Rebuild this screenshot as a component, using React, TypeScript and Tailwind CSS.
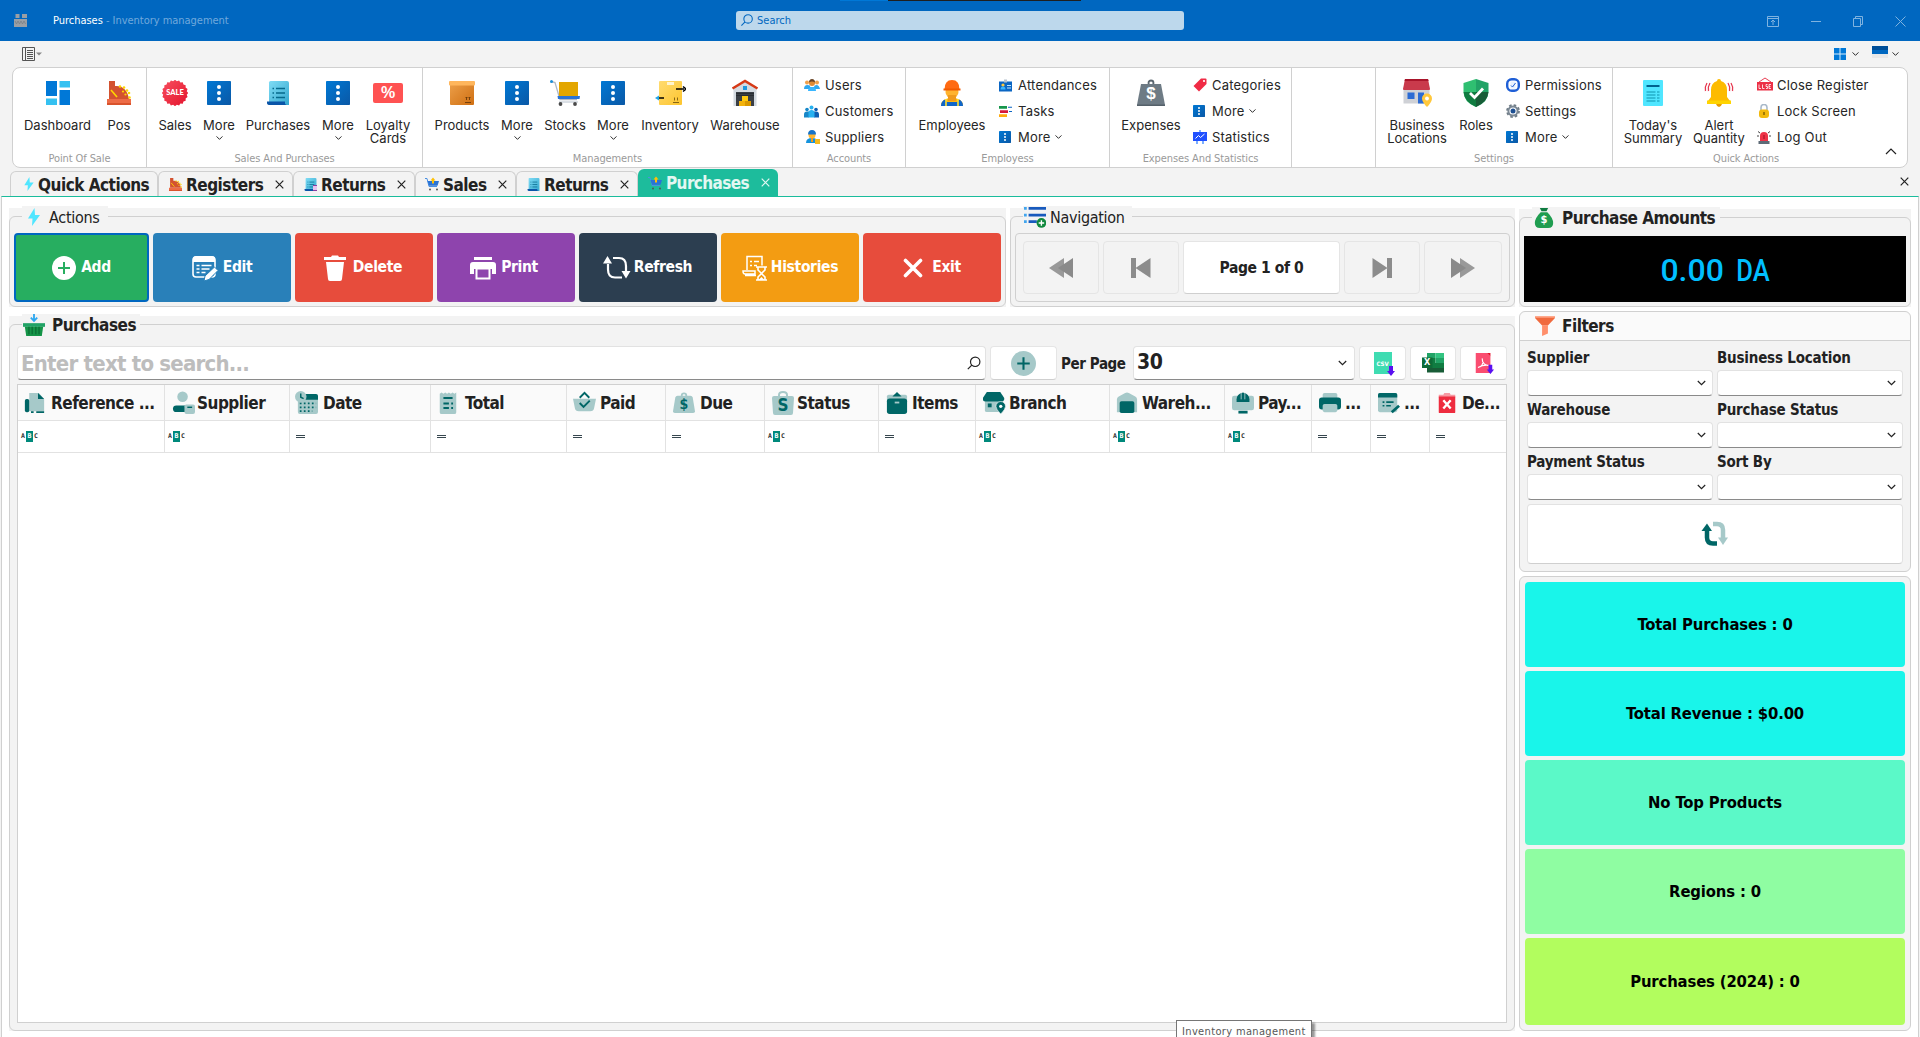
import React from "react";

type P = { className?: string };
const T = "#006666";
const L = "#a6c9c9";

function Svg({ s = 24, vb = "0 0 24 24", children, className = "" }: { s?: number; vb?: string; children: React.ReactNode; className?: string }) {
  return (
    <svg width={s} height={s} viewBox={vb} fill="none" className={`shrink-0 ${className}`}>
      {children}
    </svg>
  );
}

const Chevron = ({ className = "" }: P) => (
  <svg width="9" height="6" viewBox="0 0 9 6" fill="none" className={`shrink-0 ${className}`}>
    <path d="M.8 1l3.7 3.7L8.2 1" stroke="#222" strokeWidth="1.2" />
  </svg>
);
const Cross = ({ className = "text-[#222]" }: P) => (
  <svg width="9" height="9" viewBox="0 0 9 9" fill="none" className={`shrink-0 ${className}`}>
    <path d="M.7.7l7.6 7.6M8.3.7L.7 8.3" stroke="currentColor" strokeWidth="1.2" />
  </svg>
);
const Magnifier = ({ className = "" }: P) => (
  <svg width="14" height="14" viewBox="0 0 14 14" fill="none" className={`shrink-0 ${className}`}>
    <circle cx="8.2" cy="5.8" r="4.7" stroke="currentColor" strokeWidth="1.2" />
    <path d="M4.8 9.2L.8 13.2" stroke="currentColor" strokeWidth="1.2" />
  </svg>
);

/* Ribbon icons */
const Dashboard = () => (
  <Svg>
    <path d="M0 0h11v15H0z" fill="#0078d7" /><path d="M0 17.5h11V24H0z" fill="#35c1f1" />
    <path d="M13.5 0H24v6.500H13.500z" fill="#35c1f1" /><path d="M13.500 9H24v15H13.500z" fill="#0078d7" />
  </Svg>
);
const Register = ({ s = 24 }: { s?: number }) => (
  <Svg s={s}>
    <path d="M2 0h6v5c8-1 13 5 14 13H2z" fill="#d35230" />
    <path d="M0 18h24v6H0z" fill="#ed6c47" /><path d="M0 22h24v2H0z" fill="#d9532c" />
    <path d="M4 9l6 7" stroke="#ffd600" strokeWidth="1.6" />
    <g fill="#ffd600"><circle cx="13" cy="5.500" r="1.300" /><circle cx="17" cy="6.500" r="1.300" /><circle cx="20" cy="9.500" r="1.300" /><circle cx="22" cy="12" r="1.300" /><circle cx="16" cy="10.500" r="1.100" /><circle cx="18.500" cy="13.500" r="1.100" /><circle cx="22.500" cy="16.500" r="1.300" /></g>
  </Svg>
);
const Sale = () => {
  const pts = Array.from({ length: 40 }, (_, i) => {
    const r = i % 2 ? 11.900 : 13.200;
    const a = (i * Math.PI) / 20;
    return `${13 + r * Math.cos(a)},${13 + r * Math.sin(a)}`;
  }).join(" ");
  return (
    <div className="relative size-[26px]">
      <Svg s={26} vb="0 0 26 26">
        <defs><linearGradient id="sale" x1="0" y1="0" x2="1" y2="1"><stop stopColor="#f8505f" /><stop offset="1" stopColor="#e3122c" /></linearGradient></defs>
        <polygon points={pts} fill="url(#sale)" />
      </Svg>
      <span className="absolute inset-0 flex items-center justify-center font-[Lato] text-[7.5px] font-black text-white">SALE</span>
    </div>
  );
};
const More = ({ s = 24 }: { s?: number }) => (
  <Svg s={s}>
    <defs><linearGradient id="more" x1="0" y1="0" x2="1" y2="1"><stop stopColor="#0078d4" /><stop offset="1" stopColor="#0a58a6" /></linearGradient></defs>
    <rect width="24" height="24" rx=".8" fill="url(#more)" />
    <g fill="#fff"><circle cx="12" cy="6" r="2" /><circle cx="12" cy="12" r="2" /><circle cx="12" cy="18" r="2" /></g>
  </Svg>
);
const Scroll = ({ s = 24 }: { s?: number }) => (
  <Svg s={s}>
    <defs><linearGradient id="scroll" x1="0" y1="0" x2="1" y2="1"><stop stopColor="#7fdcf5" /><stop offset="1" stopColor="#34a8cf" /></linearGradient></defs>
    <path d="M3 1.500Q3 0 4.500 0H21q2 0 2 2v22H3z" fill="url(#scroll)" />
    <path d="M1 20.500h18V22q0 2 3 2H4q-3 0-3-2z" fill="#0a55a8" />
    <path d="M6.500 7.500h1.500M10 7.500h9M6.500 12h1.500M10 12h9M6.500 16.500h1.500M10 16.500h9" stroke="#066a8c" strokeWidth="1.400" />
  </Svg>
);
const Percent = () => (
  <div className="flex h-5 w-[30px] items-center justify-center rounded-[2px] bg-[#ff5252] font-['Liberation_Sans'] text-base font-bold text-white">%</div>
);
const Box = () => (
  <Svg s={26} vb="0 0 26 26">
    <defs><linearGradient id="box" x1="0" y1="0" x2="1" y2="1"><stop stopColor="#eda04a" /><stop offset="1" stopColor="#cf6f12" /></linearGradient></defs>
    <rect x="1" y="2" width="24" height="23" rx="1" fill="url(#box)" /><rect x="0" y="1" width="26" height="4.500" rx="1" fill="#ffb65c" />
    <path d="M16 22.500h6M17.500 20v-3m-1 1l1-1 1 1M20.500 20v-3m-1 1l1-1 1 1" stroke="#6b3a0a" strokeWidth=".9" />
  </Svg>
);
const Trolley = () => (
  <Svg s={30} vb="0 0 30 26">
    <path d="M1 1.500l4 1 5 17 17 0" stroke="#b0b8c4" strokeWidth="1.300" /><circle cx="1.500" cy="1.500" r="1.500" fill="#1b8fd8" />
    <path d="M9 2h19v14H9z" fill="#e3a600" /><path d="M7.500 16H30l-.5 3H8z" fill="#2a74d6" />
    <path d="M9 22h19" stroke="#cfd6de" strokeWidth="1.500" /><circle cx="10.500" cy="24" r="1.900" fill="#4a4a4a" /><circle cx="25" cy="24" r="1.900" fill="#4a4a4a" />
  </Svg>
);
const InventoryBox = () => (
  <Svg s={32} vb="0 0 32 26">
    <defs><linearGradient id="inv" x1="0" y1="0" x2="1" y2="1"><stop stopColor="#ffdb70" /><stop offset="1" stopColor="#fdc52e" /></linearGradient></defs>
    <rect x="5" y="1" width="23" height="24" rx="1" fill="url(#inv)" /><path d="M13 2h7v3h-7z" fill="#fff4cf" />
    <path d="M19 22.500h6M20.500 20.500v-3M23.500 20.500v-3" stroke="#7a5a10" strokeWidth=".9" />
    <path d="M22 9h8M29 6.500L32 9l-3 2.500" stroke="#000" strokeWidth="1.500" /><path d="M10 18H3" stroke="#000" strokeWidth="1.500" /><path d="M5 15.500L1 18l4 2.500" fill="#22a5e8" />
  </Svg>
);
const Garage = () => (
  <Svg s={28} vb="0 0 28 28">
    <path d="M2.500 10L14 3l11.500 7v17h-23z" fill="#d4dae0" /><path d="M1.500 9.500L14 2l12.500 7.500" stroke="#d63a17" strokeWidth="2.600" />
    <rect x="12" y="7" width="4" height="4" fill="#1d98e0" /><path d="M5 13h18v14H5z" fill="#3a3f45" /><path d="M5 14.500h18M5 16.500h18" stroke="#23272b" strokeWidth=".7" />
    <path d="M11 17h6v5h-6z" fill="#ffc90e" /><path d="M8 22h12v5H8z" fill="#d99800" /><path d="M8 22h6v5H8z" fill="#f2b20c" />
  </Svg>
);
const Worker = () => (
  <Svg s={28} vb="0 0 28 28">
    <path d="M3 27q0-8 11-8t11 8z" fill="#ffb70f" /><circle cx="14" cy="13" r="6.500" fill="#ffb32e" /><path d="M10 16h8v6h-8z" fill="#f09a1c" />
    <path d="M6.500 10.500Q6.500 1 14 1t7.500 9.500z" fill="#ff6a13" /><path d="M5.500 9.500h17v2h-17z" fill="#f25a00" />
    <path d="M3 27q0-5 4-6.500l2 2.500h10l2-2.500q4 1.500 4 6.500z" fill="#0f66c9" /><path d="M8 20v7M20 20v7" stroke="#ffe032" strokeWidth="1.600" />
  </Svg>
);
const Weight = () => (
  <div className="relative size-7">
    <Svg s={28} vb="0 0 28 28"><circle cx="14" cy="4" r="2.500" stroke="#5b6770" strokeWidth="1.800" /><path d="M4 5h20l4 21q0 1-1 1H1q-1 0-1-1z" fill="#6e7b85" /><path d="M0 25.500h28V27H0z" fill="#55616a" /></Svg>
    <span className="absolute inset-x-0 top-[5px] text-center font-['Liberation_Sans'] text-[17px] leading-5 font-bold text-white">$</span>
  </div>
);
const Store = () => (
  <Svg s={30} vb="0 0 30 28">
    <path d="M1.500 9h26v15.500h-26z" fill="#cfd1d6" /><path d="M3 0h23l2 10q0 1-1 1H2q-1 0-1-1z" fill="#c93a4c" /><path d="M3 0h23l.6 2H2.500z" fill="#a8142a" />
    <path d="M5.500 13.500h7V20h-7z" fill="#2b6bd4" /><path d="M16 13.500h6v11h-6z" fill="#2b6bd4" />
    <path d="M25 28q-5-5-5-8.500a5 5 0 0110 0q0 3.500-5 8.500z" fill="#ffc83d" /><circle cx="25" cy="19.500" r="1.900" fill="#fff" />
  </Svg>
);
const Shield = () => (
  <Svg s={28} vb="0 0 28 28">
    <path d="M14 0L1.500 4v8.500Q1.500 23 14 28z" fill="#2fbf71" /><path d="M14 0l12.500 4v8.500Q26.500 23 14 28z" fill="#21a366" />
    <path d="M1.500 13h12.500v15Q2.500 23 1.500 13z" fill="#107c41" /><path d="M26.500 13H14v15q11.500-5 12.500-15z" fill="#185c37" />
    <path d="M8 14l4.500 4.500L21 9.500" stroke="#fff" strokeWidth="2.800" />
  </Svg>
);
const Summary = () => (
  <Svg s={26} vb="0 0 26 26">
    <rect x="3" y="0" width="20" height="26" rx="1" fill="#50e6ff" /><path d="M6.500 6h13" stroke="#00638f" strokeWidth="2.200" />
    <path d="M6.500 12h9M17 12h2.500M6.500 15h9M17 15h2.500M6.500 18h9M17 18h2.500M6.500 21h9M17 21h2.500" stroke="#0f93b0" strokeWidth="1.200" />
  </Svg>
);
const Bell = () => (
  <Svg s={32} vb="0 0 32 28">
    <path d="M16 0a2 2 0 012 2q6 2 6 9v7l3 4H5l3-4v-7q0-7 6-9a2 2 0 012-2z" fill="#fdbb00" /><path d="M4 21.500h24V25H4z" fill="#ffd400" /><path d="M13 25h6q-1 3-3 3t-3-3z" fill="#e89b00" />
    <path d="M4 4Q1.500 8 2.500 12M7 4Q4.500 8 5.500 12M28 4q2.500 4 1.500 8M25 4q2.500 4 1.500 8" stroke="#e63950" strokeWidth="1.300" />
  </Svg>
);

/* Small ribbon icons */
const Users = () => (
  <Svg s={16} vb="0 0 16 12"><path d="M0 10q0-4 3.500-4T6 8h4q0-2 2.500-2T16 10z" fill="#2ea8f0" /><path d="M4 12q0-4 4-4t4 4z" fill="#39b6ff" /><circle cx="3" cy="3.500" r="2" fill="#f0a04b" /><circle cx="13" cy="3.500" r="2" fill="#f0a04b" /><circle cx="8" cy="4" r="3" fill="#e08b34" /><path d="M5 3.500Q5 0 8 0t3 3.500Q8 1.500 5 3.500z" fill="#6b4526" /></Svg>
);
const Customers = () => (
  <Svg s={15} vb="0 0 15 12"><path d="M0 12V9q0-3 3-3h2v6z" fill="#1787c8" /><path d="M15 12V9q0-3-3-3h-2v6z" fill="#0d5fb3" /><path d="M4.500 12V7q0-2.500 3-2.500t3 2.500v5z" fill="#27b1f0" /><circle cx="3" cy="4" r="1.800" fill="#1787c8" /><circle cx="12" cy="4" r="1.800" fill="#0d5fb3" /><circle cx="7.500" cy="2" r="2" fill="#27b1f0" /></Svg>
);
const Supplier = () => (
  <Svg s={14} vb="0 0 14 14" className="ml-0.5"><path d="M0 13q0-5 6-5t6 5z" fill="#1593dd" /><circle cx="6" cy="5" r="3.500" fill="#ffb52e" /><path d="M2 4.500Q2 0 6 0t4 4.500z" fill="#1674c9" /><path d="M5 8h2v4H5z" fill="#f09a1c" /><path d="M9 9h5v5H9z" fill="#f4b91c" /></Svg>
);
const IdCard = () => (
  <Svg s={13} vb="0 0 13 12"><path d="M0 2h13v10H0z" fill="#0b66c3" /><path d="M5 0h3v3H5z" fill="#b7c3cf" /><circle cx="4" cy="5.500" r="1.600" fill="#ffc83d" /><path d="M1.500 10q0-3 2.500-3t2.500 3z" fill="#39b6ff" /><path d="M8 6h4M8 8.500h4" stroke="#bfe4ff" strokeWidth="1" /></Svg>
);
const TasksIcon = () => (
  <Svg s={13} vb="0 0 13 12"><path d="M0 .5h8v2.800H0z" fill="#16964b" /><path d="M1 4.700h8v2.800H1z" fill="#d6163a" /><path d="M0 8.800h8v2.800H0z" fill="#ffab0f" /><path d="M9 1.800h4M10 6h3" stroke="#0b66c3" strokeWidth="1.100" /></Svg>
);
const Tag = () => (
  <Svg s={14} vb="0 0 14 14"><path d="M8 .5h4.500q1 0 1 1V6L6 13.500.5 8z" fill="#f02b45" /><circle cx="11" cy="3" r="1.100" fill="#fff" /></Svg>
);
const Stats = () => (
  <Svg s={14} vb="0 0 14 14"><path d="M0 2h14v9H0z" fill="#2050ff" /><path d="M7 0v2M4 11v3M10 11v3" stroke="#2479ff" strokeWidth="1.200" /><path d="M2.500 8.500l3-3 2 2 4-3.500" stroke="#fff" strokeWidth="1" /></Svg>
);
const Permission = () => (
  <Svg s={14} vb="0 0 14 14"><rect x="1.200" y="1.200" width="11.600" height="11.600" rx="4.500" stroke="#1f5fd6" strokeWidth="2.400" /><rect x="4.500" y="3.500" width="5" height="7" fill="#e9f2ff" /><path d="M5 7.500l1.500 1.500L9.500 5" stroke="#1f5fd6" strokeWidth="1" /></Svg>
);
const Gear = () => (
  <Svg s={14} vb="0 0 14 14"><circle cx="7" cy="7" r="5.800" stroke="#6e7b85" strokeWidth="2.200" strokeDasharray="2.500 2.050" /><circle cx="7" cy="7" r="4.600" stroke="#7b8894" strokeWidth="2" /><circle cx="7" cy="7" r="2.500" fill="#1d4f91" /></Svg>
);
const CloseReg = () => (
  <Svg s={16} vb="0 0 16 16"><path d="M2 5l6-4 6 4" stroke="#e5283f" strokeWidth=".9" /><path d="M0 5h16v8.500H0z" fill="#ec2f45" /><path d="M2 7.500v4h2M5.500 7.500v4h2M9 11.500h1.500v-2H9v-2h1.500M14 7.500h-2v4h2M12 9.500h1.500" stroke="#fff" strokeWidth=".8" /></Svg>
);
const Lock = () => (
  <Svg s={14} vb="0 0 14 14"><path d="M4 7V3.500a3 3 0 016 0V7" stroke="#a9b9c9" strokeWidth="1.600" /><rect x="2" y="5.500" width="10" height="8.500" rx="3" fill="#f2b90c" /><path d="M7 8v3" stroke="#6b5000" strokeWidth="1.200" /></Svg>
);
const Siren = () => (
  <Svg s={14} vb="0 0 14 14"><path d="M3 11V6q0-4 4-4t4 4v5z" fill="#ee3247" /><path d="M7 5v4" stroke="#9c1025" strokeWidth="1" /><path d="M1.500 11h11v3h-11z" fill="#5e6b77" /><path d="M0 6h2M12 6h2M1 1.500l2 1.500M13 1.500l-2 1.500" stroke="#444" strokeWidth="1" /></Svg>
);
const CartSm = () => (
  <Svg s={14} vb="0 0 14 13"><path d="M0 1h2l2 8h8" stroke="#4a90e2" strokeWidth="1" /><path d="M2.500 3.500H14l-1.500 4.800H4z" fill="#2a74d6" /><path d="M7 6V3H5.500L8 0l2.500 3H9v3z" fill="#ffc107" /><circle cx="5" cy="12" r="1" fill="#555" /><circle cx="12" cy="12" r="1" fill="#555" /></Svg>
);
const Bolt = ({ h, w }: { h: number; w: number }) => (
  <svg width={w} height={h} viewBox="0 0 12 18" className="shrink-0"><path d="M6.500 0L0 10.500h4.500L4 18l8-11H7z" fill="#50e6ff" /></svg>
);

function Big({ w, icon, a, b, chev }: { w: string; icon: React.ReactNode; a: string; b?: string; chev?: boolean }) {
  return (
    <div className={`flex flex-col items-center pt-[9px] ${w}`}>
      <div className="flex h-8 items-center">{icon}</div>
      <div className="mt-2.5 text-[13px] leading-[13px] whitespace-nowrap">{a}</div>
      {b && <div className="text-[13px] leading-[13px] whitespace-nowrap">{b}</div>}
      {chev && <Chevron className="mt-[3px] scale-[.8]" />}
    </div>
  );
}
function Small({ items, gap }: { items: [React.ReactNode, string, boolean?][]; gap: string }) {
  return (
    <div className="flex flex-col pt-1">
      {items.map(([ic, t, c]) => (
        <div key={t} className="flex h-[26px] items-center">
          <div className={`flex ${gap}`}>{ic}</div>
          <span className="pt-px text-[13px] tracking-[.2px] whitespace-nowrap">{t}</span>
          {c && <Chevron className="ml-[3px] scale-[.8]" />}
        </div>
      ))}
    </div>
  );
}
function Group({ w, pl, name, children }: { w: string; pl: string; name?: string; children?: React.ReactNode }) {
  return (
    <div className={`flex flex-col border-r border-[#d0d0d0] last:border-r-0 ${w}`}>
      <div className={`flex h-[83px] ${pl}`}>{children}</div>
      <div className="text-center font-['DejaVu_Sans_Condensed'] text-[11px] leading-4 tracking-[-.1px] text-[#9a9a9a]">{name}</div>
    </div>
  );
}

function Ribbon() {
  return (
    <div className="mx-3 flex h-[101px] shrink-0 overflow-hidden rounded-lg border border-[#d0d0d0] bg-white font-[Inter] text-[#262626]">
      <Group w="w-[134px]" pl="pl-2.5" name="Point Of Sale">
        <Big w="w-[69px]" icon={<Dashboard />} a="Dashboard" />
        <Big w="w-[54px]" icon={<Register />} a="Pos" />
      </Group>
      <Group w="w-[276px]" pl="pl-1" name="Sales And Purchases">
        <Big w="w-12" icon={<Sale />} a="Sales" />
        <Big w="w-10" icon={<More />} a="More" chev />
        <Big w="w-[78px]" icon={<Scroll />} a="Purchases" />
        <Big w="w-[42px]" icon={<More />} a="More" chev />
        <Big w="w-[58px]" icon={<Percent />} a="Loyalty" b="Cards" />
      </Group>
      <Group w="w-[370px]" pl="pl-2" name="Managements">
        <Big w="w-[62px]" icon={<Box />} a="Products" />
        <Big w="w-12" icon={<More />} a="More" chev />
        <Big w="w-12" icon={<Trolley />} a="Stocks" />
        <Big w="w-12" icon={<More />} a="More" chev />
        <Big w="w-[66px]" icon={<InventoryBox />} a="Inventory" />
        <Big w="w-[84px]" icon={<Garage />} a="Warehouse" />
      </Group>
      <Group w="w-[113px]" pl="pl-[11px]" name="Accounts">
        <Small gap="w-[21px]" items={[[<Users />, "Users"], [<Customers />, "Customers"], [<Supplier />, "Suppliers"]]} />
      </Group>
      <Group w="w-[204px]" pl="pl-[7px]" name="Employess">
        <Big w="w-[78px] mr-2" icon={<Worker />} a="Employees" />
        <Small gap="w-[19px]" items={[[<IdCard />, "Attendances"], [<TasksIcon />, "Tasks"], [<More s={12} />, "More", true]]} />
      </Group>
      <Group w="w-[182px]" pl="pl-2" name="Expenses And Statistics">
        <Big w="w-[66px] mr-[9px]" icon={<Weight />} a="Expenses" />
        <Small gap="w-[19px]" items={[[<Tag />, "Categories"], [<More s={12} />, "More", true], [<Stats />, "Statistics"]]} />
      </Group>
      <Group w="w-[84px]" pl="" />
      <Group w="w-[237px]" pl="pl-2" name="Settings">
        <Big w="w-[66px]" icon={<Store />} a="Business" b="Locations" />
        <Big w="w-[52px] mr-1" icon={<Shield />} a="Roles" />
        <Small gap="w-[19px]" items={[[<Permission />, "Permissions"], [<Gear />, "Settings"], [<More s={12} />, "More", true]]} />
      </Group>
      <div className="relative flex grow flex-col">
        <div className="flex h-[83px] pl-1.5">
          <Big w="w-[68px]" icon={<Summary />} a="Today's" b="Summary" />
          <Big w="w-16 mr-1.5" icon={<Bell />} a="Alert" b="Quantity" />
          <Small gap="w-5" items={[[<CloseReg />, "Close Register"], [<Lock />, "Lock Screen"], [<Siren />, "Log Out"]]} />
        </div>
        <div className="pr-7 text-center font-['DejaVu_Sans_Condensed'] text-[11px] leading-4 tracking-[-.1px] text-[#9a9a9a]">Quick Actions</div>
        <svg width="12" height="7" viewBox="0 0 12 7" fill="none" className="absolute right-2.5 bottom-3"><path d="M1 6l5-5 5 5" stroke="#222" strokeWidth="1.200" /></svg>
      </div>
    </div>
  );
}

function Tab({ w, icon, t, x = true }: { w: string; icon: React.ReactNode; t: string; x?: boolean }) {
  return (
    <div className={`flex h-[25px] items-center rounded-t-md border border-b-0 border-[#d0d0d0] bg-[#f3f3f3] text-[#222] ${w}`}>
      <div className="mr-1 flex">{icon}</div>
      <span className="pt-px text-[17px] leading-5 font-bold tracking-[-.5px] whitespace-nowrap">{t}</span>
      {x && <Cross className="mr-2 ml-auto text-[#222]" />}
    </div>
  );
}

function Legend({ icon, t, w, bold }: { icon: React.ReactNode; t: string; w: string; bold?: boolean }) {
  return (
    <div className={`absolute -top-[11px] left-3 flex h-[22px] items-center bg-[#f3f3f3] ${w}`}>
      <div className={`flex justify-center ${bold ? "w-[30px] pr-1.5" : "w-[27px] pr-1"}`}>{icon}</div>
      <span className={`pt-0.5 whitespace-nowrap text-[#222] ${bold ? "text-[17px] font-bold tracking-[-.5px]" : "text-base tracking-[-.3px]"}`}>{t}</span>
    </div>
  );
}
function Panel({ children, className = "", legend }: { children: React.ReactNode; className?: string; legend: React.ReactNode }) {
  return (
    <div className={`flex flex-col bg-[#f3f3f3] pt-2 ${className}`}>
      <div className="relative flex grow flex-col rounded-md border border-[#d0d0d0]">
        {legend}
        {children}
      </div>
    </div>
  );
}

function ActionBtn({ c, icon, t, g = "gap-[5px]" }: { c: string; icon: React.ReactNode; t: string; g?: string }) {
  return (
    <button className={`flex h-[69px] items-center justify-center rounded pt-px text-[15.500px] font-bold tracking-[-.35px] text-white ${g} ${c}`}>
      {icon}
      <span>{t}</span>
    </button>
  );
}

const PlusCircle = ({ s, bg, fg }: { s: number; bg: string; fg: string }) => (
  <Svg s={s}><circle cx="12" cy="12" r="12" fill={bg} /><path d="M12 6v12M6 12h12" stroke={fg} strokeWidth="2" /></Svg>
);
const EditI = () => (
  <Svg s={26} vb="0 0 26 26"><rect x="1" y="2" width="22" height="20" rx="3" stroke="#fff" strokeWidth="1.600" /><path d="M1 4q0-3 3-3h16q3 0 3 3v3H1z" fill="#fff" /><path d="M4.500 10.500h3M9.500 10.500h10M4.500 14h3M9.500 14h8M4.500 17.500h3M9.500 17.500h4" stroke="#fff" strokeWidth="1.500" /><path d="M12 26l1-5 9.500-9 3.500 3.500-9 9z" fill="#fff" stroke="#2980b9" strokeWidth="1" /></Svg>
);
const TrashI = () => (
  <Svg s={26} vb="0 0 26 26"><path d="M2 2h7l1-1.500h6L17 2h7v3H2z" fill="#fff" /><path d="M4 7h18l-2 17q0 2-2 2H8q-2 0-2-2z" fill="#fff" /></Svg>
);
const PrintI = () => (
  <Svg s={26} vb="0 0 26 26"><path d="M4 2h18v3H4z" fill="#fff" /><path d="M3 7h20q3 0 3 3v9h-4v-5H4v5H0v-9q0-3 3-3z" fill="#fff" /><path d="M6.500 13.500h13v10h-13z" stroke="#fff" strokeWidth="2" /></Svg>
);
const RefreshI = () => (
  <Svg s={30} vb="0 0 30 26"><path d="M11 3h6q7 0 7 8v5M20 22.500h-7q-7 0-7-8V9" stroke="#fff" strokeWidth="2.200" /><path d="M1 8.500L5.500 1 10 8.500zM19.500 16h9L24 23.500z" fill="#fff" /></Svg>
);
const HistI = () => (
  <Svg s={26} vb="0 0 26 26"><path d="M5 15V1.500h15v9M1 16h12v3H3q-2 0-2-3zM3 20.500h11" stroke="#fff" strokeWidth="1.500" /><path d="M8 6.500h2M12 6.500h5M8 10.500h2M12 10.500h3" stroke="#fff" strokeWidth="1.500" /><path d="M14 12h11M14 25h11M16 12v3l3.500 3.500L16 22v3M23 12v3l-3.500 3.500L23 22v3" stroke="#fff" strokeWidth="1.600" /><path d="M16.500 25l3-3 3 3z" fill="#fff" /></Svg>
);
const ExitI = () => (
  <Svg s={20} vb="0 0 20 20" className="mr-1"><path d="M2.500 2.500l15 15M17.500 2.500l-15 15" stroke="#fff" strokeWidth="3.600" strokeLinecap="round" /></Svg>
);

/* Column header icons */
const H: Record<string, React.ReactNode> = {
  ref: <Svg s={21}><path d="M6 1h11l6 7v14H6z" fill={L} /><path d="M16 1l7 7h-7z" fill={T} /><rect x="1" y="8" width="5" height="15" rx="2" fill={T} /><path d="M8 23h3M14 23h9" stroke={T} strokeWidth="2" /></Svg>,
  sup: <Svg s={23}><circle cx="11" cy="6" r="5.500" fill={L} /><rect x="1" y="15" width="17" height="7" rx="3.500" fill={T} /><rect x="13" y="14" width="11" height="10" rx="2" fill={L} /><path d="M16 17h5" stroke={T} strokeWidth="1.500" /></Svg>,
  date: <Svg s={23}><rect x="3" y="4" width="21" height="20" rx="2" fill={L} /><path d="M10 3h12q2 0 2 2v4H8z" fill={T} /><path d="M5 13h17M5 17h17M5 21h13" stroke={T} strokeWidth="1.800" strokeDasharray="1.800 2.400" /><circle cx="6" cy="6" r="6" fill={L} /><path d="M6 2.500V6.500l3 1.500" stroke={T} strokeWidth="1.500" /></Svg>,
  total: <Svg s={22}><path d="M3 2l2-1.500 2 1.500 2-1.500 2 1.500 2-1.500 2 1.500 2-1.500 2 1.500 2-1.500V22q0 2-2 2H5q-2 0-2-2z" fill={L} /><path d="M7 6.500h10M7 12.500h6M7 17.500h6M15.500 12.500h2M15.500 17.500h2" stroke={T} strokeWidth="2.200" /></Svg>,
  paid: <Svg s={23}><path d="M0 8h24l-2 10q-.5 3-4 3H6q-3.500 0-4-3z" fill={L} /><path d="M7 7l5-5 5 5" stroke={T} strokeWidth="2" /><path d="M7 12.500l4 4 6.500-6.500" stroke={T} strokeWidth="2" /></Svg>,
  due: <div className="relative size-[22px]"><Svg s={22}><circle cx="12" cy="4" r="2.500" stroke={L} strokeWidth="2" /><path d="M5 4h14q2 0 2.500 2L24 21q0 2-2 2H2q-2 0-2-2L2.500 6Q3 4 5 4z" fill={L} /></Svg><span className="absolute inset-0 text-center text-[14px] leading-6 font-bold text-[#006666]">$</span></div>,
  status: <div className="relative size-[24px]"><Svg s={24}><path d="M8 6V4q0-3 4-3t4 3v2" stroke={L} strokeWidth="2" /><path d="M3 5h18q2 0 2 2l-1 15q0 2-2 2H4q-2 0-2-2L1 7q0-2 2-2z" fill={L} /></Svg><span className="absolute inset-0 text-center text-[17px] leading-7 font-bold text-[#006666]">S</span></div>,
  items: <Svg s={22}><rect x="1" y="3" width="22" height="10" rx="2" fill={L} /><rect x="1" y="7" width="22" height="17" rx="3" fill={T} /><path d="M7 5l5-5 5 5z" fill={T} /><path d="M9.500 11.500h5" stroke={L} strokeWidth="2" /></Svg>,
  branch: <Svg s={23}><path d="M2 10h19v12H4q-2 0-2-2z" fill={L} /><path d="M4 1h14l4 6q1 4-3 4H3q-4 0-3-4z" fill={T} /><path d="M5 13h4v4H5z" fill={T} /><path d="M18.500 24q-5-5-5-8a5 5 0 0110 0q0 3-5 8z" fill={T} stroke="#fafafa" strokeWidth=".6" /><circle cx="18.500" cy="16" r="1.700" fill="#fff" /></Svg>,
  ware: <Svg s={22}><path d="M1 8q0-2 2-3l7-4q2-1 4 0l7 4q2 1 2 3v14H1z" fill={L} /><rect x="4" y="10" width="16" height="13" rx="2" fill={T} /></Svg>,
  pay: <Svg s={22}><rect x="0" y="4" width="24" height="16" rx="2.500" fill={L} /><path d="M5 8q0-6 7-7.500 7 1.500 7 7.500v3H5z" fill={T} /><path d="M10 1v7M14 1v7" stroke={L} strokeWidth="1" /><path d="M7 22h10" stroke={T} strokeWidth="3" /></Svg>,
  print: <Svg s={22}><rect x="4" y="1" width="16" height="10" rx="2" fill={L} /><rect y="6" width="24" height="13" rx="3" fill={T} /><rect x="4" y="13" width="16" height="9" rx="2" fill={L} /></Svg>,
  edit: <Svg s={22}><rect x="0" y="1" width="21" height="21" rx="2" fill={L} /><path d="M2 1h17q2 0 2 2v3H0V3q0-2 2-2z" fill={T} /><path d="M5 11h2M9 11h8M5 15h2M9 15h5" stroke={T} strokeWidth="1.800" /><path d="M15 22l8-7" stroke={T} strokeWidth="3" /></Svg>,
  del: <Svg s={22}><path d="M3 3h5l1-2h6l1 2h5v3H3z" fill="#f79aa3" /><path d="M3 5h18v17q0 1-1 1H4q-1 0-1-1z" fill="#ee2c3f" /><path d="M8 9l8 9M16 9l-8 9" stroke="#fff" strokeWidth="2.600" /></Svg>,
};

const cols: { k: string; t: string; w: string; abc?: boolean; g: string }[] = [
  { k: "ref", t: "Reference ...", w: "w-[147px]", abc: true, g: "pl-1.5 gap-1.5" },
  { k: "sup", t: "Supplier", w: "w-[125px]", abc: true, g: "pl-[7px] gap-0.5" },
  { k: "date", t: "Date", w: "w-[141px]", g: "pl-[5px] gap-[5px]" },
  { k: "total", t: "Total", w: "w-[136px]", g: "pl-1.5 gap-1.5" },
  { k: "paid", t: "Paid", w: "w-[99px]", g: "pl-1.5 gap-1" },
  { k: "due", t: "Due", w: "w-[99px]", g: "pl-[7px] gap-[5px]" },
  { k: "status", t: "Status", w: "w-[114px]", abc: true, g: "pl-1.5 gap-0.5" },
  { k: "items", t: "Items", w: "w-[97px]", g: "pl-[7px] gap-1" },
  { k: "branch", t: "Branch", w: "w-[134px]", abc: true, g: "pl-[7px] gap-[3px]" },
  { k: "ware", t: "Wareh...", w: "w-[115px]", abc: true, g: "pl-1.5 gap-1" },
  { k: "pay", t: "Pay...", w: "w-[87px]", abc: true, g: "pl-[7px] gap-1" },
  { k: "print", t: "...", w: "w-[59px]", g: "pl-[7px] gap-1" },
  { k: "edit", t: "...", w: "w-[59px]", g: "pl-[7px] gap-1" },
  { k: "del", t: "De...", w: "w-[76px]", g: "pl-1.5 gap-1" },
];

const Abc = () => (
  <div className="flex items-center gap-px pl-[3px] font-['DejaVu_Sans_Mono'] text-[6.500px] leading-[11px] font-bold text-[#333]">
    <span>A</span><span className="w-[7px] bg-[#00897b] text-center text-white">B</span><span>C</span>
  </div>
);
const Eq = () => (
  <div className="ml-1.5 flex h-[3px] w-[9px] flex-col justify-between"><div className="h-px bg-[#37474f]" /><div className="h-px bg-[#37474f]" /></div>
);

const navIcons: Record<string, React.ReactNode> = {
  first: <Svg s={24} vb="0 0 24 20"><path d="M15 0v20L0 10z" fill="#999" /><path d="M24 0v20L9 10z" fill="#8a8a8a" /></Svg>,
  prev: <Svg s={20} vb="0 0 20 20"><path d="M0 0h5v20H0zM19.500 0v20L4.500 10z" fill="#8c8c8c" /></Svg>,
  next: <Svg s={20} vb="0 0 20 20"><path d="M15 0h5v20h-5zM.5 0v20l15-10z" fill="#8c8c8c" /></Svg>,
  last: <Svg s={24} vb="0 0 24 20"><path d="M9 0v20l15-10z" fill="#999" /><path d="M0 0v20l15-10z" fill="#8a8a8a" /></Svg>,
};
const NavBtn = ({ w, k }: { w: string; k: string }) => (
  <div className={`flex h-[53px] items-center justify-center rounded border border-[#e5e5e5] ${w}`}>{navIcons[k]}</div>
);
const IconBtn = ({ w, children }: { w: string; children: React.ReactNode }) => (
  <div className={`flex h-[34px] items-center justify-center rounded border border-[#e5e5e5] border-b-[#cfcfcf] bg-white ${w}`}>{children}</div>
);

function Combo({ label }: { label: string }) {
  return (
    <div className="flex w-[186px] flex-col">
      <div className="h-[26px] pt-0.5 text-[15px] leading-6 font-bold tracking-[-.2px] whitespace-nowrap">{label}</div>
      <div className="flex h-[26px] items-center justify-end rounded border border-[#e2e2e2] border-b-[#8a8a8a] bg-white pr-1.5"><Chevron /></div>
    </div>
  );
}

const cards: [string, string][] = [
  ["Total Purchases : 0", "h-[85px] bg-[#19f5ea]"],
  ["Total Revenue : $0.00", "h-[85px] bg-[#19f5ea]"],
  ["No Top Products", "h-[85px] bg-[#5bf9c8]"],
  ["Regions : 0", "h-[85px] bg-[#8ffda2]"],
  ["Purchases (2024) : 0", "grow bg-[#b2fd5e]"],
];

export default function App() {
  return (
    <div className="relative flex h-[1037px] w-[1920px] flex-col overflow-hidden bg-[#f3f3f3] font-['DejaVu_Sans_Condensed',sans-serif] text-[#222]">
      <header className="relative flex h-[41px] shrink-0 items-center bg-[#0067c0] text-[11px]">
        <div className="absolute top-0 left-[840px] flex h-px w-[241px]"><div className="w-12 bg-[#0078d7]" /><div className="grow bg-[#1f1f1f]" /></div>
        <Svg s={13} vb="0 0 13 13" className="ml-3.5"><path d="M0 5h13v8H0zM1.500 0h4v4h-4zM8 0h5v4H8z" fill="#9a9fa5" /><path d="M1 7l1.500 3L4 7l1.500 3L7 7l1.500 3L10 7l1.500 3" stroke="#7a8087" strokeWidth=".8" /></Svg>
        <div className="ml-[26px] w-[683px] pt-0.5 tracking-[-.03px] whitespace-nowrap text-[#71a9dc]"><span className="text-white">Purchases</span> - Inventory management</div>
        <div className="flex h-[19px] w-[448px] items-center rounded-[3px] bg-[#bdd8ec] pl-1 text-[#0067c0]">
          <Magnifier className="mb-px scale-90" /><span className="ml-[3px] pt-0.5">Search</span>
        </div>
        <div className="ml-auto flex items-center pt-0.5 text-[#7fb3e0]">
          <svg width="12" height="11" viewBox="0 0 12 11" fill="none" className="mr-8"><path d="M.5.500h11v10H.5zM.5 2.500h11M6 9V4.500M4 6l2-2 2 2" stroke="currentColor" /></svg>
          <svg width="10" height="11" viewBox="0 0 10 11" className="mr-[32px]"><path d="M0 5.500h10" stroke="currentColor" /></svg>
          <svg width="10" height="11" viewBox="0 0 10 11" fill="none" className="mr-[32px]"><path d="M.5 2.500h7v8h-7zM2.500 2.500v-2h7v8h-2" stroke="currentColor" /></svg>
          <svg width="11" height="11" viewBox="0 0 11 11" className="mr-[14px]"><path d="M.5.500l10 10M10.500.500l-10 10" stroke="currentColor" /></svg>
        </div>
      </header>

      <div className="flex h-[26px] shrink-0 items-center pr-[20px] pl-[22px]">
        <svg width="13" height="14" viewBox="0 0 13 14" fill="none"><path d="M.5.500h12v13H.5zM3.500.500v13M5 3.500h6M5 5.500h6M5 7.500h6M5 9.500h6M5 11.500h6" stroke="#555" /></svg>
        <svg width="6" height="4" viewBox="0 0 6 4" className="ml-px"><path d="M0 .5h6L3 3.500z" fill="#888" /></svg>
        <svg width="12" height="12" viewBox="0 0 12 12" className="ml-auto"><path d="M0 0h12v12H0z" fill="#0078d7" /><path d="M6 0v12M0 6h12" stroke="#d6ebfa" /></svg>
        <Chevron className="mr-[12px] ml-[5px] scale-[.8]" />
        <div className="mb-1 flex h-3 w-4 flex-col"><div className="h-1 bg-[#004e98]" /><div className="h-1 bg-[#0067c0]" /><div className="grow bg-[#e8e8e8]" /></div>
        <Chevron className="ml-[3px] scale-[.8]" />
      </div>

      <Ribbon />

      <div className="flex h-7 shrink-0 items-end pt-px pl-[10px]">
        <Tab w="w-[148px] pl-[13px]" icon={<Bolt w={10} h={14} />} t="Quick Actions" x={false} />
        <Tab w="w-[135px] pl-2.5" icon={<Register s={13} />} t="Registers" />
        <Tab w="w-[122px] pl-2.5" icon={<div className="relative"><Scroll s={13} /><div className="absolute right-0 bottom-0 h-1.5 w-1 border-y border-[#8a3fa0] bg-[#e7c3f0]" /></div>} t="Returns" />
        <Tab w="w-[101px] pl-[9px]" icon={<CartSm />} t="Sales" />
        <Tab w="w-[122px] pl-2.5" icon={<Scroll s={13} />} t="Returns" />
        <div className="flex h-[27px] w-[140px] items-center rounded-t-md bg-[#1dbc9c] pr-2 pl-2.5 text-[#e3f7f2]">
          <CartSm />
          <span className="ml-1 pt-0.5 text-[17px] font-bold tracking-[-.6px]">Purchases</span>
          <Cross className="ml-auto text-[#e3f7f2]" />
        </div>
        <Cross className="mr-[11px] mb-[10px] ml-auto text-[#222]" />
      </div>

      <main className="mx-px flex grow gap-1 border-x border-t border-x-[#d0d0d0] border-t-[#1abc9c] bg-white pt-[11px] pr-[6px] pb-[6px] pl-[7px]">
        <div className="flex w-[1506px] flex-col">
          <div className="flex h-[99px] gap-1">
            <Panel className="w-[997px]" legend={<Legend icon={<Bolt w={12} h={18} />} t="Actions" w="w-[86px]" />}>
              <div className="mt-4 grid grid-cols-[135px_repeat(6,138px)] gap-1 pl-1">
                <ActionBtn c="bg-[#27ae60] border-2 border-[#0067c0]" icon={<PlusCircle s={24} bg="#fff" fg="#27ae60" />} t="Add" />
                <ActionBtn c="bg-[#2980b9]" icon={<EditI />} t="Edit" />
                <ActionBtn c="bg-[#e74c3c] pr-1" icon={<TrashI />} t="Delete" />
                <ActionBtn c="bg-[#8e44ad] pr-1" icon={<PrintI />} t="Print" />
                <ActionBtn c="bg-[#2c3e50] pr-0.5" g="gap-0.5" icon={<RefreshI />} t="Refresh" />
                <ActionBtn c="bg-[#f39c12]" g="gap-[3px]" icon={<HistI />} t="Histories" />
                <ActionBtn c="bg-[#e74c3c]" icon={<ExitI />} t="Exit" />
              </div>
            </Panel>
            <Panel className="w-[505px]" legend={<Legend icon={<Svg s={22}><path d="M5 2.500h19M5 10h19M5 17h9" stroke="#185abd" strokeWidth="3" /><path d="M0 2.500h3M0 10h3M0 17h3" stroke="#41a5ee" strokeWidth="3" /><circle cx="19" cy="18.500" r="5.300" fill="#10893e" /><path d="M19 15.500v6M16 18.500h6" stroke="#fff" strokeWidth="1.500" /></Svg>} t="Navigation" w="w-[109px]" />}>
              <div className="mx-1 mt-4 flex h-[69px] items-center gap-1 rounded border border-[#d0d0d0] pl-[7px]">
                <NavBtn w="w-[76px]" k="first" />
                <NavBtn w="w-[76px]" k="prev" />
                <div className="flex h-[53px] w-[157px] items-center justify-center rounded border border-[#e5e5e5] border-b-[#cfcfcf] bg-white pt-0.5 text-[15.500px] font-bold tracking-[-.4px]">Page 1 of 0</div>
                <NavBtn w="w-[76px]" k="next" />
                <NavBtn w="w-[78px]" k="last" />
              </div>
            </Panel>
          </div>

          <Panel
            className="mt-[9px] grow"
            legend={<Legend bold icon={<Svg s={22}><path d="M12 0v7M8.500 4L12 7.500 15.500 4" stroke="#2ea8f0" strokeWidth="2" /><path d="M0 10h24v4H0z" fill="#21a366" /><path d="M2 14h20l-1.500 10h-17z" fill="#149447" /><path d="M6.500 14v8M10 14v8M14 14v8M17.500 14v8" stroke="#0a6b33" strokeWidth="1.300" /></Svg>} t="Purchases" w="w-[118px]" />}
          >
            <div className="mt-[21px] flex items-center pl-[7px]">
              <div className="flex h-[34px] w-[969px] items-center justify-between rounded border border-[#e2e2e2] border-b-[#8a8a8a] bg-white pr-1 pl-[3px]">
                <span className="text-[22px] font-bold tracking-[-.77px] text-[#bdbdbd]">Enter text to search...</span>
                <Magnifier />
              </div>
              <IconBtn w="ml-1 w-[67px]"><PlusCircle s={25} bg={L} fg={T} /></IconBtn>
              <span className="ml-1 w-[72px] pt-0.5 text-[15px] font-bold tracking-[-.4px] whitespace-nowrap">Per Page</span>
              <div className="flex h-[34px] w-[222px] items-center justify-between rounded border border-[#e2e2e2] border-b-[#8a8a8a] bg-white pr-[7px] pl-[3px]">
                <span className="text-[21px] font-bold tracking-[-.3px]">30</span><Chevron />
              </div>
              <IconBtn w="ml-1 w-[47px]">
                <div className="relative flex h-[22px] w-[18px] items-center justify-center bg-[#3fdcb2] text-[6px] font-bold text-white">CSV<svg width="8" height="10" viewBox="0 0 8 10" className="absolute -right-[3px] -bottom-0.5"><path d="M2 0h4v5h2l-4 5-4-5h2z" fill="#5a10f0" /></svg></div>
              </IconBtn>
              <IconBtn w="ml-1 w-[46px]">
                <div className="relative">
                  <Svg s={22} vb="0 0 22 20"><path d="M5 0h8.500v5H5z" fill="#21a366" /><path d="M13.500 0H22v5h-8.500z" fill="#33c481" /><path d="M5 5h8.500v5H5z" fill="#107c41" /><path d="M13.500 5H22v5h-8.500z" fill="#21a366" /><path d="M5 10h17v5H5z" fill="#107c41" /><path d="M5 15h17v4.500H5z" fill="#185c37" /><path d="M0 4.500h10.500V15H0z" fill="#0d6b38" /></Svg>
                  <span className="absolute top-[5px] left-0 w-[10px] text-center text-[9px] leading-[11px] font-bold text-white">X</span>
                </div>
              </IconBtn>
              <IconBtn w="ml-1 w-[47px]">
                <Svg s={22} vb="0 0 22 24"><path d="M2 1h12l4 4v18H2z" fill="#fa4d70" /><path d="M14 1h4v4z" fill="#e5122c" /><path d="M4.500 17c5-1 6-5 4.500-10 0 5 3 8 7 7.500-4-.5-8 .5-11.500 2.500z" stroke="#fff" strokeWidth="1.200" /><path d="M16 14h4v5h2l-4 5-4-5h2z" fill="#5a10f0" /></Svg>
              </IconBtn>
            </div>

            <div className="mt-1 mr-[7px] mb-[7px] ml-[7px] flex grow flex-col border border-[#d0d0d0] bg-white">
              <div className="flex h-9 border-b border-[#e2e2e2] bg-[#fafafa]">
                {cols.map((c) => (
                  <div key={c.k} className={`flex shrink-0 items-center overflow-hidden border-r border-[#e2e2e2] last:border-r-0 ${c.w} ${c.g}`}>
                    {H[c.k]}
                    <span className="pt-0.5 text-[17px] font-bold tracking-[-.5px] whitespace-nowrap">{c.t}</span>
                  </div>
                ))}
              </div>
              <div className="flex h-8 border-b border-[#e2e2e2]">
                {cols.map((c) => (
                  <div key={c.k} className={`flex shrink-0 items-center border-r border-[#e2e2e2] last:border-r-0 ${c.w}`}>{c.abc ? <Abc /> : <Eq />}</div>
                ))}
              </div>
            </div>
          </Panel>
        </div>

        <div className="flex w-[392px] flex-col gap-1">
          <Panel className="mt-px h-[98px]" legend={<Legend bold icon={<div className="relative"><Svg s={20}><path d="M7 0h10l-2 4H9z" fill="#107c41" /><path d="M8 5h8q7 7 7 13t-6 6H7q-6 0-6-6T8 5z" fill="#1f9d50" /></Svg><span className="absolute inset-x-0 top-1 text-center text-[11px] leading-[15px] font-bold text-white">$</span></div>} t="Purchase Amounts" w="w-[188px]" />}>
            <div className="mx-1 mt-[18px] flex h-[66px] items-center justify-center gap-3 bg-black pt-0.5 font-[Roboto] text-[32px] font-medium text-[#00bfff]">
              <span>0.00</span>
              <span className="-mx-1 inline-block scale-x-[.8]">DA</span>
            </div>
          </Panel>

          <div className="flex h-[261px] flex-col rounded-md border border-[#d0d0d0] bg-[#f3f3f3]">
            <div className="flex h-[29px] items-center rounded-t-md border-b border-[#d0d0d0] bg-[#fafafa] pl-[15px]">
              <Svg s={20}><path d="M0 0h24v2.500l-8.500 9H8.500L0 2.500z" fill="#f06a3e" /><path d="M0 0h24v2H0z" fill="#ffa98c" /><path d="M8.500 11h7v10l-7 3z" fill="#ff8f6b" /></Svg>
              <span className="ml-[7px] pt-0.5 text-[17px] font-bold tracking-[-.5px]">Filters</span>
            </div>
            <div className="mt-[3px] grid grid-cols-2 gap-x-1 px-[7px]">
              {["Supplier", "Business Location", "Warehouse", "Purchase Status", "Payment Status", "Sort By"].map((l) => <Combo key={l} label={l} />)}
            </div>
            <div className="mx-[7px] mt-1 flex h-[60px] items-center justify-center rounded border border-[#e2e2e2] border-b-[#cfcfcf] bg-white">
              <Svg s={28} vb="0 0 28 24"><path d="M12 2h4q6 0 6 6v8" stroke={L} strokeWidth="4.500" /><path d="M17 15.500h10L22 23z" fill={L} /><path d="M16 21.500h-4q-6 0-6-6V9" stroke={T} strokeWidth="4.500" /><path d="M.5 9h10.500L6 1.500z" fill={T} /></Svg>
            </div>
          </div>

          <div className="flex grow flex-col gap-1 rounded-md border border-[#d0d0d0] bg-[#f3f3f3] p-[5px]">
            {cards.map(([t, c]) => (
              <div key={t} className={`flex items-center justify-center rounded pt-0.5 text-[16.500px] font-bold tracking-[-.15px] text-black ${c}`}>{t}</div>
            ))}
          </div>
        </div>
      </main>

      <div className="absolute top-[1020px] left-[1176px] h-6 w-[136px] border border-[#767676] bg-white pl-[5px] text-[11px] leading-[21px] tracking-[.35px] whitespace-nowrap text-[#575757] shadow-[3px_3px_2px_rgba(0,0,0,.4)]">Inventory management</div>
    </div>
  );
}
